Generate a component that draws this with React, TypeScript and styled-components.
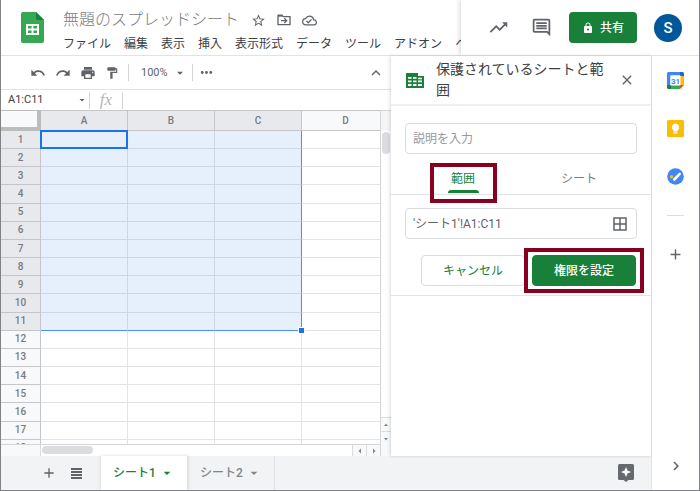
import React from 'react';
import styled, { createGlobalStyle, css } from 'styled-components';
import {
  MdAdd,
  MdArrowDropDown,
  MdBorderAll,
  MdClose,
  MdFormatPaint,
  MdKeyboardArrowRight,
  MdKeyboardArrowUp,
  MdLock,
  MdMoreHoriz,
  MdOutlineCloudDone,
  MdOutlineComment,
  MdPrint,
  MdRedo,
  MdStarBorder,
  MdTrendingUp,
  MdUndo,
} from 'react-icons/md';

const GREEN = '#188038';
const GREY = '#5f6368';
const LINE = '#e0e2e5';
const BLUE = '#1a73e8';
const MARK = '#880020';

const GlobalStyle = createGlobalStyle`
  *, *::before, *::after { box-sizing: border-box; }
  body {
    margin: 0;
    background: #fff;
    color: #3c4043;
    font: 12px/18px Roboto, 'Noto Sans CJK JP', sans-serif;
  }
  button, input { font: inherit; color: inherit; }
  svg { display: block; flex: none; }
`;

const Window = styled.div`
  display: flex;
  flex-direction: column;
  height: 100vh;
  overflow: hidden;
  border: solid #808285;
  border-width: 0 1px 1px;
`;

const Plain = styled.button`
  display: flex;
  align-items: center;
  justify-content: center;
  padding: 0;
  border: 0;
  background: none;
  white-space: nowrap;
  cursor: pointer;
`;

const IconButton = styled(Plain)`
  color: ${GREY};
`;

/* Header */

const Header = styled.header`
  display: flex;
  flex: none;
  height: 56px;
  border-bottom: 1px solid ${LINE};
`;

const HeaderMain = styled.div`
  display: flex;
  flex: 1;
  min-width: 0;
  overflow: hidden;
  padding-left: 20px;
  gap: 19px;
`;

const Logo = styled.svg`
  margin-top: 12px;
`;

const HeaderText = styled.div`
  display: flex;
  flex-direction: column;
  padding-top: 9px;
`;

const TitleRow = styled.div`
  display: flex;
  align-items: center;
  gap: 10px;
  height: 22px;
`;

const DocTitle = styled.h1`
  margin: 0 2px 0 0;
  color: #777b7f;
  font-size: 16px;
  font-weight: 300;
  line-height: 22px;
  white-space: nowrap;
`;

const MenuBar = styled.nav`
  display: flex;
  gap: 13px;
  margin-top: 4px;
`;

const MenuItem = styled(Plain)`
  height: 18px;
  color: #3c4043;
`;

const HeaderActions = styled.div`
  display: flex;
  flex: none;
  align-items: center;
  gap: 17px;
  padding: 0 17px 0 27px;
  box-shadow: -2px 0 4px rgba(60, 64, 67, 0.16);
  clip-path: inset(0 0 0 -6px);
`;

const ActionIcons = styled.div`
  display: flex;
  gap: 22px;
`;

const ShareButton = styled(Plain)`
  gap: 6px;
  width: 68px;
  height: 31px;
  border-radius: 4px;
  background: ${GREEN};
  color: #fff;
  font-weight: 500;
`;

const Avatar = styled(Plain)`
  width: 28px;
  height: 28px;
  border-radius: 50%;
  background: #01579b;
  color: #fff;
  font-size: 15px;
  font-weight: 500;
`;

/* Body */

const Body = styled.div`
  display: flex;
  flex: 1;
  min-height: 0;
`;

const Workspace = styled.div`
  display: flex;
  flex: 1;
  flex-direction: column;
  min-width: 0;
`;

const Split = styled.div`
  display: flex;
  flex: 1;
  min-height: 0;
`;

const Editor = styled.main`
  display: flex;
  flex: 1;
  flex-direction: column;
  min-width: 0;
`;

const Toolbar = styled.div`
  display: flex;
  flex: none;
  align-items: center;
  gap: 9px;
  height: 34px;
  padding: 0 6px 0 29px;
  border-bottom: 1px solid ${LINE};
`;

const ToolGroup = styled.div`
  display: flex;
  align-items: center;
  gap: 5px;
`;

const Separator = styled.span`
  flex: none;
  width: 1px;
  height: 17px;
  background: #d2d4d8;
`;

const ZoomButton = styled(Plain)`
  gap: 5px;
  padding: 0 0 0 3px;
  color: ${GREY};
  font-size: 11px;
`;

const Spacer = styled.span`
  flex: 1;
`;

const FormulaBar = styled.div`
  display: flex;
  flex: none;
  align-items: center;
  height: 20px;
  padding-left: 7px;
`;

const NameBox = styled.input`
  width: 67px;
  padding: 0;
  border: 0;
  outline: 0;
  font-size: 11px;
`;

const NameArrow = styled(IconButton)`
  width: 14px;
`;

const Fx = styled.span`
  width: 32px;
  color: #b4b7ba;
  font: italic 17px/18px 'Liberation Serif', serif;
  text-align: center;
`;

const FormulaInput = styled.input`
  flex: 1;
  min-width: 0;
  height: 16px;
  border: 0;
  outline: 0;
`;

/* Grid */

const GridArea = styled.div`
  display: grid;
  flex: 1;
  grid-template: minmax(0, 1fr) 11px / minmax(0, 1fr) 10px;
  min-height: 0;
`;

const GridView = styled.div`
  overflow: hidden;
  border-right: 1px solid #d5d6d8;
  border-bottom: 1px solid #d5d6d8;
`;

const Sheet = styled.table`
  width: 100%;
  min-width: 389px;
  height: 348px;
  border-collapse: separate;
  border-spacing: 0;
  table-layout: fixed;
`;

const Col = styled.col<{ $kind: 'row' | 'fixed' | 'rest' }>`
  width: ${(p) => (p.$kind === 'row' ? '40px' : p.$kind === 'fixed' ? '87px' : 'auto')};
`;

const headCell = css<{ $on?: boolean }>`
  padding: 0;
  border: solid #c4c6c9;
  background: ${(p) => (p.$on ? '#e8e9ed' : '#f8f9fa')};
  color: #777b80;
  font-size: 10px;
  font-weight: 500;
  line-height: 14px;
`;

const Corner = styled.td`
  height: 21px;
  padding: 0;
  border: solid #bcbcbc;
  border-width: 1px 4px 4px 0;
  background: #f8f9fa;
`;

const ColHead = styled.th<{ $on?: boolean }>`
  ${headCell}
  height: 21px;
  border-width: 1px 1px 1px 0;
`;

const RowHead = styled.th<{ $on?: boolean }>`
  ${headCell}
  height: 18px;
  border-width: 0 1px 1px 0;
`;

const cellLine = (selected: boolean, edge: boolean) =>
  edge ? '#4a90f0' : selected ? '#cdd7e3' : '#e2e3e3';

const Cell = styled.td<{ $sel: boolean; $right: boolean; $bottom: boolean; $active: boolean }>`
  position: relative;
  padding: 0;
  border-style: solid;
  border-width: 0 1px 1px 0;
  border-color: transparent ${(p) => cellLine(p.$sel, p.$right)} ${(p) => cellLine(p.$sel, p.$bottom)} transparent;
  background: ${(p) => (p.$sel ? '#e6f0fc' : '#fff')};
  ${(p) =>
    p.$active &&
    css`
      &::after {
        content: '';
        position: absolute;
        inset: -1px;
        border: 2px solid ${BLUE};
      }
    `}
`;

const FillHandle = styled.span`
  position: absolute;
  right: -4px;
  bottom: -4px;
  z-index: 1;
  width: 7px;
  height: 7px;
  border: 1px solid #fff;
  background: ${BLUE};
`;

const VScroll = styled.div`
  display: flex;
  flex-direction: column;
  justify-content: space-between;
  padding-top: 21px;
  border-top: 1px solid #d5d6d8;
  background: linear-gradient(#f5f5f6 20px, #fff 20px);
`;

const HScroll = styled.div`
  display: flex;
  justify-content: space-between;
  padding-left: 40px;
  border-right: 1px solid #d5d6d8;
  background: linear-gradient(90deg, #f8f9fa 39px, #dadce0 39px, #dadce0 40px, #fff 40px);
`;

const Thumb = styled.span<{ $vertical?: boolean }>`
  width: ${(p) => (p.$vertical ? 8 : 51)}px;
  height: ${(p) => (p.$vertical ? 22 : 8)}px;
  margin: ${(p) => (p.$vertical ? '0 1px' : '1px 1px')};
  border-radius: 4px;
  background: #dadce0;
`;

const ScrollButtons = styled.span<{ $vertical?: boolean }>`
  display: flex;
  flex-direction: ${(p) => (p.$vertical ? 'column' : 'row')};
`;

const ScrollButton = styled(Plain)<{ $vertical?: boolean }>`
  width: ${(p) => (p.$vertical ? 10 : 14)}px;
  height: ${(p) => (p.$vertical ? 14 : 11)}px;
  border: solid #dadce0;
  border-width: ${(p) => (p.$vertical ? '1px 0 0' : '0 0 0 1px')};
  background: #f8f9fa;
  color: #80868b;
`;

const ScrollCorner = styled.div`
  background: #f8f9fa;
`;

/* Side panel */

const Panel = styled.aside`
  z-index: 1;
  flex: none;
  width: 260px;
  background: #fff;
  box-shadow: -1px 0 3px rgba(60, 64, 67, 0.2);
`;

const PanelHead = styled.div`
  display: flex;
  align-items: center;
  gap: 12px;
  height: 50px;
  padding: 0 16px 0 15px;
  border-bottom: 2px solid #eeeff1;
`;

const PanelTitle = styled.h2`
  flex: 1;
  margin: 0;
  font-size: 14px;
  font-weight: 400;
  line-height: 21px;
`;

const PanelForm = styled.form`
  padding: 17px 0 9px;
  border-bottom: 1px solid ${LINE};
`;

const Field = styled.label`
  display: flex;
  align-items: center;
  height: 31px;
  margin: 0 14px;
  padding: 0 7px;
  border: 1px solid #dadce0;
  border-radius: 4px;
  color: ${GREY};
`;

const FieldInput = styled.input`
  flex: 1;
  min-width: 0;
  padding: 0;
  border: 0;
  outline: 0;
  background: none;
  &::placeholder { color: #96999d; opacity: 1; }
`;

const Tabs = styled.div`
  display: flex;
  margin-bottom: 13px;
  padding: 9px 14px 0;
  border-bottom: 1px solid ${LINE};
`;

const Tab = styled(Plain)<{ $on?: boolean }>`
  position: relative;
  flex: 1;
  height: 31px;
  color: ${(p) => (p.$on ? GREEN : '#777b80')};
`;

const Underline = styled.span`
  position: absolute;
  bottom: 1px;
  left: calc(50% - 15px);
  width: 31px;
  height: 3px;
  border-radius: 3px 3px 0 0;
  background: ${GREEN};
`;

const Highlight = styled.span<{ $wide?: boolean }>`
  position: absolute;
  inset: ${(p) => (p.$wide ? '-8px -9px' : '0 24px -9px 25px')};
  border: 4px solid ${MARK};
  ${(p) => p.$wide && 'box-shadow: inset 0 0 0 3px #fff;'}
  pointer-events: none;
`;

const Actions = styled.div`
  display: flex;
  justify-content: flex-end;
  gap: 7px;
  margin: 16px 15px 0;
`;

const ActionButton = styled(Plain)<{ $primary?: boolean }>`
  position: relative;
  width: 104px;
  height: 31px;
  border: 1px solid ${(p) => (p.$primary ? GREEN : '#dadce0')};
  border-radius: 4px;
  background: ${(p) => (p.$primary ? GREEN : '#fff')};
  color: ${(p) => (p.$primary ? '#fff' : GREEN)};
  font-weight: ${(p) => (p.$primary ? 500 : 400)};
`;

/* Sheet tabs */

const Footer = styled.footer`
  display: flex;
  flex: none;
  align-items: stretch;
  height: 34px;
  padding: 0 17px 0 40px;
  background: #f1f3f4;
`;

const FooterTools = styled.div`
  display: flex;
  gap: 14px;
  margin-right: 19px;
`;

const SheetTab = styled(Plain)<{ $on?: boolean }>`
  gap: 3px;
  width: 87px;
  border-right: 1px solid #e0e2e5;
  background: ${(p) => (p.$on ? '#fff' : 'transparent')};
  box-shadow: ${(p) => (p.$on ? '0 0 3px rgba(60, 64, 67, 0.2)' : 'none')};
  color: ${(p) => (p.$on ? GREEN : '#80868b')};
  font-weight: 500;
`;

/* Right rail */

const Rail = styled.aside`
  display: flex;
  flex: none;
  flex-direction: column;
  align-items: center;
  width: 48px;
  padding: 16px 0 15px;
  border-left: 1px solid ${LINE};
`;

const RailIcons = styled.div`
  display: flex;
  flex-direction: column;
  align-items: center;
  gap: 31px;
`;

const RailRule = styled.span`
  width: 17px;
  height: 1px;
  margin: 30px 0;
  background: #dadce0;
`;

const COLUMNS = ['A', 'B', 'C', 'D'];
const ROWS = Array.from({ length: 18 }, (_, i) => i + 1);
const MENUS = ['ファイル', '編集', '表示', '挿入', '表示形式', 'データ', 'ツール', 'アドオン', 'ヘルプ'];

const SheetsLogo = () => (
  <Logo width="23" height="31" viewBox="0 0 23 31" aria-hidden="true">
    <path d="M2 0h13l8 8v21a2 2 0 0 1-2 2H2a2 2 0 0 1-2-2V2a2 2 0 0 1 2-2z" fill="#34a853" />
    <path d="M15 0l8 8h-6a2 2 0 0 1-2-2z" fill="#188038" />
    <path d="M5 12h13v11H5zM7 14v2.4h3.6V14zM12.4 14v2.4H16V14zM7 18.4v2.6h3.6v-2.6zM12.4 18.4v2.6H16v-2.6z" fill="#fff" fillRule="evenodd" />
  </Logo>
);

const MoveIcon = () => (
  <svg width="16" height="16" viewBox="0 0 24 24" fill="none" stroke={GREY} strokeWidth="2" aria-hidden="true">
    <path d="M3 5h6l2 2h10v12H3z" />
    <path d="M3 4h7v3H3z" fill={GREY} stroke="none" />
    <path d="M7.500 13h8M12.500 9.500l3.500 3.500-3.500 3.500" />
  </svg>
);

const Triangle = ({ d }: { d: string }) => (
  <svg width="6" height="6" viewBox="0 0 6 6" fill="currentColor" aria-hidden="true">
    <path d={d} />
  </svg>
);

const ProtectedIcon = () => (
  <svg width="18" height="15" viewBox="0 0 18 15" aria-hidden="true">
    <path d="M0 0h12v3h6v12H0z" fill={GREEN} />
    <path d="M2 4h3.500v1.800H2zM7 4h3.500v1.800H7zM12 4.800h4v1.400h-4zM2 7.500h3.500v1.800H2zM7 7.500h3.500v1.800H7zM12 7.500h4v1.800h-4zM2 11h3.500v2H2zM7 11h3.500v2H7zM12 11h4v2h-4z" fill="#fff" />
  </svg>
);

const CalendarIcon = () => (
  <svg width="17" height="17" viewBox="0 0 17 17" aria-hidden="true">
    <path d="M1.500 0H13v3.500H3.500V13H0V1.500A1.500 1.500 0 0 1 1.500 0z" fill="#4285f4" />
    <path d="M13 0h2.500A1.500 1.500 0 0 1 17 1.500V4h-4z" fill="#1967d2" />
    <path d="M13 4h4v9h-4z" fill="#fbbc04" />
    <path d="M4 13h9v4H4z" fill="#34a853" />
    <path d="M0 13h4v4H1.500A1.500 1.500 0 0 1 0 15.500z" fill="#188038" />
    <path d="M13 13h4l-4 4z" fill="#ea4335" />
    <path d="M3.500 3.500H13.500V13.500H3.500z" fill="#fff" />
    <text x="8.500" y="11.500" textAnchor="middle" fontFamily="Roboto, sans-serif" fontSize="8" fontWeight="700" fill="#4285f4">31</text>
  </svg>
);

const KeepIcon = () => (
  <svg width="17" height="17" viewBox="0 0 17 17" aria-hidden="true">
    <rect width="17" height="17" rx="1.500" fill="#fbbc04" />
    <path d="M8.500 3.500a3.700 3.700 0 0 0-2 6.800V11.500h4V10.300a3.700 3.700 0 0 0-2-6.800zM6.500 12.300h4v1.200h-4z" fill="#fff" />
  </svg>
);

const TasksIcon = () => (
  <svg width="17" height="17" viewBox="0 0 17 17" aria-hidden="true">
    <circle cx="8.500" cy="8.500" r="8.300" fill="#4285f4" />
    <path d="M7.300 11.500l5.400-5.600" stroke="#fff" strokeWidth="2.600" strokeLinecap="round" />
    <circle cx="4.600" cy="8.700" r="1.700" fill="#fbbc04" />
  </svg>
);

const ListIcon = () => (
  <svg width="11" height="11" viewBox="0 0 11 11" fill={GREY} aria-hidden="true">
    <path d="M0 0h11v2H0zM0 3h11v2H0zM0 6h11v2H0zM0 9h11v2H0z" />
  </svg>
);

const ExploreIcon = () => (
  <svg width="16" height="18" viewBox="0 0 16 18" aria-hidden="true">
    <path d="M1.500 0h13A1.500 1.500 0 0 1 16 1.500v13a1.500 1.500 0 0 1-1.500 1.500H10.500L8 18l-2.500-2H1.500A1.500 1.500 0 0 1 0 14.500v-13A1.500 1.500 0 0 1 1.500 0z" fill="#666a6e" />
    <path d="M8 3l1.500 3.500L13 8 9.500 9.500 8 13 6.500 9.500 3 8l3.500-1.500z" fill="#fff" />
  </svg>
);

const SheetGrid = () => (
  <Sheet>
    <colgroup>
      <Col $kind="row" />
      <Col $kind="fixed" />
      <Col $kind="fixed" />
      <Col $kind="fixed" />
      <Col $kind="rest" />
    </colgroup>
    <thead>
      <tr>
        <Corner />
        {COLUMNS.map((c, i) => (
          <ColHead key={c} scope="col" $on={i < 3}>{c}</ColHead>
        ))}
      </tr>
    </thead>
    <tbody>
      {ROWS.map((r) => (
        <tr key={r}>
          <RowHead scope="row" $on={r <= 11}>{r}</RowHead>
          {COLUMNS.map((c, i) => (
            <Cell
              key={c}
              $sel={i < 3 && r <= 11}
              $right={i === 2 && r <= 11}
              $bottom={i < 3 && r === 11}
              $active={i === 0 && r === 1}
            >
              {i === 2 && r === 11 && <FillHandle />}
            </Cell>
          ))}
        </tr>
      ))}
    </tbody>
  </Sheet>
);

const App: React.FC = () => (
  <>
    <GlobalStyle />
    <Window>
      <Header>
        <HeaderMain>
          <SheetsLogo />
          <HeaderText>
            <TitleRow>
              <DocTitle>無題のスプレッドシート</DocTitle>
              <IconButton aria-label="スターを付ける"><MdStarBorder size={15} /></IconButton>
              <IconButton aria-label="移動"><MoveIcon /></IconButton>
              <IconButton aria-label="保存の状態"><MdOutlineCloudDone size={15} /></IconButton>
            </TitleRow>
            <MenuBar>
              {MENUS.map((m) => <MenuItem key={m}>{m}</MenuItem>)}
            </MenuBar>
          </HeaderText>
        </HeaderMain>
        <HeaderActions>
          <ActionIcons>
            <IconButton aria-label="アクティビティ"><MdTrendingUp size={21} /></IconButton>
            <IconButton aria-label="コメント"><MdOutlineComment size={21} /></IconButton>
          </ActionIcons>
          <ShareButton><MdLock size={12} />共有</ShareButton>
          <Avatar aria-label="アカウント">S</Avatar>
        </HeaderActions>
      </Header>
      <Body>
        <Workspace>
          <Split>
            <Editor>
              <Toolbar>
                <IconButton aria-label="元に戻す"><MdUndo size={16} /></IconButton>
                <IconButton aria-label="やり直し"><MdRedo size={16} /></IconButton>
                <IconButton aria-label="印刷"><MdPrint size={16} /></IconButton>
                <IconButton aria-label="書式を貼り付け"><MdFormatPaint size={14} /></IconButton>
                <Separator />
                <ToolGroup>
                  <ZoomButton>100%<MdArrowDropDown size={14} /></ZoomButton>
                  <Separator />
                  <IconButton aria-label="その他"><MdMoreHoriz size={17} /></IconButton>
                </ToolGroup>
                <Spacer />
                <IconButton aria-label="メニューを非表示"><MdKeyboardArrowUp size={18} /></IconButton>
              </Toolbar>
              <FormulaBar>
                <NameBox aria-label="名前ボックス" defaultValue="A1:C11" />
                <NameArrow aria-label="範囲の一覧"><MdArrowDropDown size={12} /></NameArrow>
                <Separator />
                <Fx>fx</Fx>
                <Separator />
                <FormulaInput aria-label="数式" />
              </FormulaBar>
              <GridArea>
                <GridView><SheetGrid /></GridView>
                <VScroll>
                  <Thumb $vertical />
                  <ScrollButtons $vertical>
                    <ScrollButton $vertical aria-label="上へ"><Triangle d="M1 4l2-2.500L5 4z" /></ScrollButton>
                    <ScrollButton $vertical aria-label="下へ"><Triangle d="M1 2l2 2.500L5 2z" /></ScrollButton>
                  </ScrollButtons>
                </VScroll>
                <HScroll>
                  <Thumb />
                  <ScrollButtons>
                    <ScrollButton aria-label="左へ"><Triangle d="M4 .5v5L1.500 3z" /></ScrollButton>
                    <ScrollButton aria-label="右へ"><Triangle d="M2 .5v5L4.500 3z" /></ScrollButton>
                  </ScrollButtons>
                </HScroll>
                <ScrollCorner />
              </GridArea>
            </Editor>
            <Panel>
              <PanelHead>
                <ProtectedIcon />
                <PanelTitle>保護されているシートと範囲</PanelTitle>
                <IconButton aria-label="閉じる"><MdClose size={16} /></IconButton>
              </PanelHead>
              <PanelForm onSubmit={(e) => e.preventDefault()}>
                <Field>
                  <FieldInput aria-label="説明" placeholder="説明を入力" />
                </Field>
                <Tabs role="tablist">
                  <Tab type="button" role="tab" aria-selected="true" $on>
                    範囲
                    <Underline />
                    <Highlight />
                  </Tab>
                  <Tab type="button" role="tab" aria-selected="false">シート</Tab>
                </Tabs>
                <Field>
                  <FieldInput aria-label="範囲" defaultValue="'シート1'!A1:C11" />
                  <MdBorderAll size={18} />
                </Field>
                <Actions>
                  <ActionButton type="button">キャンセル</ActionButton>
                  <ActionButton type="submit" $primary>
                    権限を設定
                    <Highlight $wide />
                  </ActionButton>
                </Actions>
              </PanelForm>
            </Panel>
          </Split>
          <Footer>
            <FooterTools>
              <IconButton aria-label="シートを追加"><MdAdd size={16} /></IconButton>
              <IconButton aria-label="すべてのシート"><ListIcon /></IconButton>
            </FooterTools>
            <SheetTab $on>シート1<MdArrowDropDown size={16} /></SheetTab>
            <SheetTab>シート2<MdArrowDropDown size={16} /></SheetTab>
            <Spacer />
            <IconButton aria-label="データ探索"><ExploreIcon /></IconButton>
          </Footer>
        </Workspace>
        <Rail>
          <RailIcons>
            <IconButton aria-label="カレンダー"><CalendarIcon /></IconButton>
            <IconButton aria-label="Keep"><KeepIcon /></IconButton>
            <IconButton aria-label="ToDo リスト"><TasksIcon /></IconButton>
          </RailIcons>
          <RailRule />
          <IconButton aria-label="アドオンを取得"><MdAdd size={17} /></IconButton>
          <Spacer />
          <IconButton aria-label="サイドパネルを非表示"><MdKeyboardArrowRight size={18} /></IconButton>
        </Rail>
      </Body>
    </Window>
  </>
);

export default App;
